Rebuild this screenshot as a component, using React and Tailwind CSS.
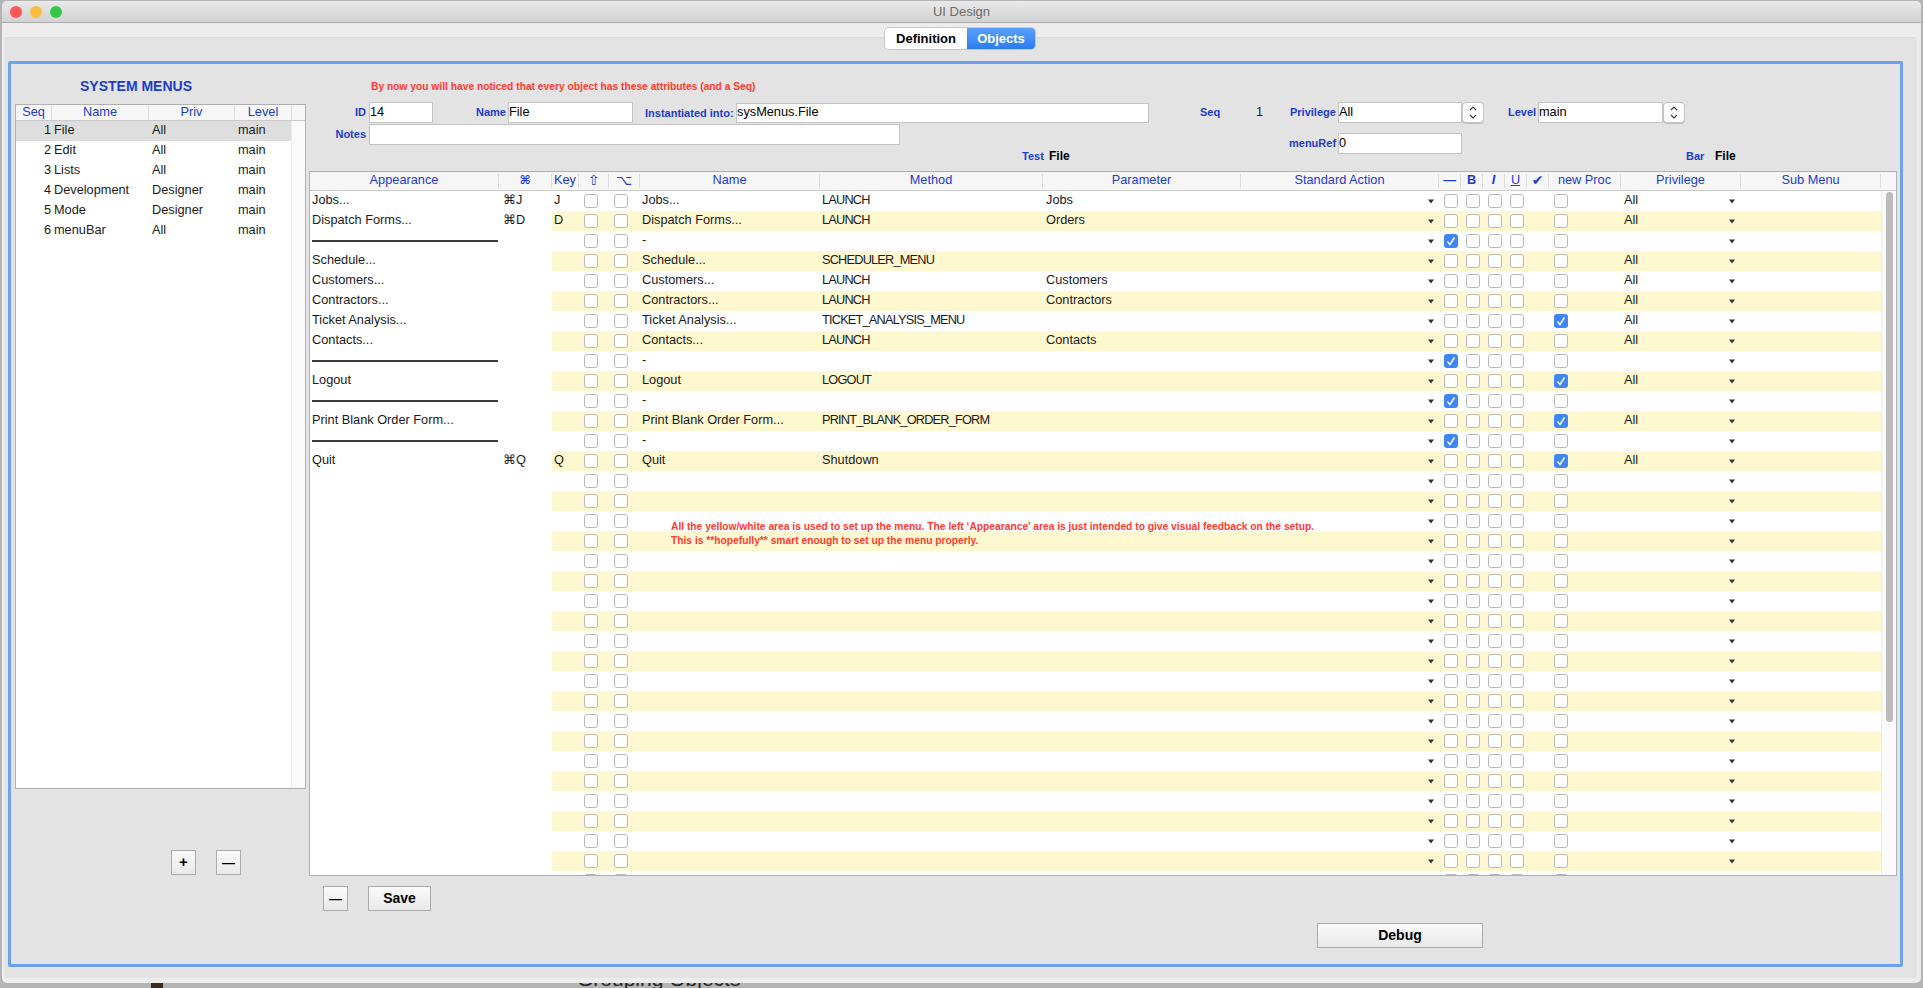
const MENU_ROWS = [
  { look: "Jobs...", cmd: "⌘J", key: "J", name: "Jobs...", method: "LAUNCH", param: "Jobs", priv: "All" },
  { look: "Dispatch Forms...", cmd: "⌘D", key: "D", name: "Dispatch Forms...", method: "LAUNCH", param: "Orders", priv: "All" },
  { sep: true, name: "-" },
  { look: "Schedule...", name: "Schedule...", method: "SCHEDULER_MENU", priv: "All" },
  { look: "Customers...", name: "Customers...", method: "LAUNCH", param: "Customers", priv: "All" },
  { look: "Contractors...", name: "Contractors...", method: "LAUNCH", param: "Contractors", priv: "All" },
  { look: "Ticket Analysis...", name: "Ticket Analysis...", method: "TICKET_ANALYSIS_MENU", newProc: true, priv: "All" },
  { look: "Contacts...", name: "Contacts...", method: "LAUNCH", param: "Contacts", priv: "All" },
  { sep: true, name: "-" },
  { look: "Logout", name: "Logout", method: "LOGOUT", newProc: true, priv: "All" },
  { sep: true, name: "-" },
  { look: "Print Blank Order Form...", name: "Print Blank Order Form...", method: "PRINT_BLANK_ORDER_FORM", newProc: true, priv: "All" },
  { sep: true, name: "-" },
  { look: "Quit", cmd: "⌘Q", key: "Q", name: "Quit", method: "Shutdown", newProc: true, priv: "All" },
];

const ROWS = Array.from({ length: 35 }, (_, i) => MENU_ROWS[i] || {});

const SYSTEM_MENUS = [
  { seq: 1, name: "File", priv: "All" },
  { seq: 2, name: "Edit", priv: "All" },
  { seq: 3, name: "Lists", priv: "All" },
  { seq: 4, name: "Development", priv: "Designer" },
  { seq: 5, name: "Mode", priv: "Designer" },
  { seq: 6, name: "menuBar", priv: "All" },
];

const LEFT_COLS = "grid grid-cols-[189px_53px]";
const RIGHT_COLS = "grid grid-cols-[27px_30px_31px_180px_223px_198px_198px_22px_22px_22px_22px_22px_72px_120px_140px]";
const LIST_COLS = "grid grid-cols-[36px_97px_86px_57px]";

const HeadCell = ({ children, className = "" }) => (
  <div className={`h-[14px] leading-[12px] text-center border-r border-[#dcdcdc] text-[#1c3ccf] ${className}`}>
    {children}
  </div>
);

const Label = ({ children, className = "" }) => (
  <div className={`text-[11px] leading-[20px] font-bold whitespace-nowrap text-[#1c3ccf] ${className}`}>{children}</div>
);

const Field = ({ value = "", className = "" }) => (
  <input
    readOnly
    value={value}
    className={`block bg-white border border-[#c4c4c4] pb-[3px] text-[12.75px] text-black outline-none ${className}`}
  />
);

const Stepper = () => (
  <div className="w-[22px] h-[21px] bg-white border border-[#c4c4c4] rounded-[4px] flex items-center justify-center shadow-[0_1px_0_#bdbdbd]">
    <svg width="8" height="15" viewBox="0 0 8 15" fill="none" stroke="#333" strokeWidth="1.1">
      <path d="M1 5 L4 2 L7 5" />
      <path d="M1 10 L4 13 L7 10" />
    </svg>
  </div>
);

const Check = ({ on }) =>
  on ? (
    <div className="w-[14px] h-[14px] rounded-[3px] bg-[#3f86f5] flex items-center justify-center">
      <svg width="10" height="10" viewBox="0 0 10 10" fill="none" stroke="#fff" strokeWidth="1.4">
        <path d="M1.5 5.5 L4 8.5 L8.5 1.5" />
      </svg>
    </div>
  ) : (
    <div className="w-[14px] h-[14px] rounded-[3px] bg-white border border-[#b8b8b8]" />
  );

const Caret = () => (
  <svg width="6" height="5" viewBox="0 0 6 5" fill="#333">
    <path d="M0 0.5 H6 L3 4.5 Z" />
  </svg>
);

const BoxCell = ({ on }) => (
  <div className="h-[20px] pl-[5px] flex items-center">
    <Check on={on} />
  </div>
);

const SquareButton = ({ children, className = "" }) => (
  <button className={`flex items-center justify-center bg-linear-to-b from-[#fafafa] to-[#e9e9e9] border border-[#ababab] text-black font-bold ${className}`}>
    {children}
  </button>
);

const Row = ({ row, index }) => (
  <div className="flex h-[20px] leading-[18px] text-[#1a1a1a]">
    <div className={`${LEFT_COLS} w-[242px]`}>
      <div className="pl-[2px]">
        {row.sep ? <div className="mt-[9px] w-[186px] h-[2px] bg-[#3a3a3a]" /> : row.look}
      </div>
      <div className="pl-[4px]">{row.cmd}</div>
    </div>
    <div className={`${RIGHT_COLS} w-[1329px] ${index % 2 === 1 ? "bg-[#fef8d0]" : "bg-white"}`}>
      <div className="pl-[2px]">{row.key}</div>
      <BoxCell />
      <BoxCell />
      <div className="pl-[2px]">{row.name}</div>
      <div className={`pl-[2px] ${row.method && row.method === row.method.toUpperCase() ? "tracking-[-0.8px]" : ""}`}>{row.method}</div>
      <div className="pl-[3px]">{row.param}</div>
      <div className="h-[20px] pr-[5px] pt-[1px] flex items-center justify-end">
        <Caret />
      </div>
      <BoxCell on={row.sep} />
      <BoxCell />
      <BoxCell />
      <BoxCell />
      <div />
      <BoxCell on={row.newProc} />
      <div className="h-[20px] pl-[3px] pr-[6px] flex items-center justify-between">
        <span className="-mt-[2px]">{row.priv}</span>
        <span className="ml-auto pt-[1px] flex">
          <Caret />
        </span>
      </div>
      <div />
    </div>
  </div>
);

const MenuTable = () => (
  <div className="relative w-[1588px] h-[705px] bg-white border border-[#b0b0b0] overflow-hidden text-[12.75px]">
    <div className="flex items-center h-[19px] bg-[#f6f6f6] border-b border-[#c9c9c9]">
      <div className={`${LEFT_COLS} w-[242px]`}>
        <HeadCell>Appearance</HeadCell>
        <HeadCell className="font-['DejaVu_Sans',sans-serif] font-bold text-[12px]">⌘</HeadCell>
      </div>
      <div className={`${RIGHT_COLS} w-[1329px]`}>
        <HeadCell>Key</HeadCell>
        <HeadCell className="font-['DejaVu_Sans',sans-serif] text-[14px]">⇧</HeadCell>
        <HeadCell className="font-['DejaVu_Sans',sans-serif] text-[14px]">⌥</HeadCell>
        <HeadCell>Name</HeadCell>
        <HeadCell>Method</HeadCell>
        <HeadCell>Parameter</HeadCell>
        <HeadCell>Standard Action</HeadCell>
        <HeadCell className="font-bold">—</HeadCell>
        <HeadCell className="font-bold">B</HeadCell>
        <HeadCell className="font-bold italic">I</HeadCell>
        <HeadCell className="underline">U</HeadCell>
        <HeadCell className="font-['DejaVu_Sans',sans-serif] text-[14px]">✔</HeadCell>
        <HeadCell>new Proc</HeadCell>
        <HeadCell>Privilege</HeadCell>
        <HeadCell>Sub Menu</HeadCell>
      </div>
    </div>
    <div className="flex">
      <div className="w-[1571px]">
        {ROWS.map((row, i) => (
          <Row key={i} row={row} index={i} />
        ))}
      </div>
      <div className="w-[15px] h-[686px] bg-[#fafafa] border-l border-[#ececec] pl-[4px] pt-[1px]">
        <div className="w-[7px] h-[530px] rounded-full bg-[#bcbcbc]" />
      </div>
    </div>
    {/* note lies over the rows */}
    <div className="absolute left-[361px] top-[348px] text-[10.25px] leading-[14px] font-bold text-[#ff3b30] whitespace-nowrap">
      <div>All the yellow/white area is used to set up the menu. The left ‘Appearance’ area is just intended to give visual feedback on the setup.</div>
      <div>This is **hopefully** smart enough to set up the menu properly.</div>
    </div>
  </div>
);

const SidePanel = () => (
  <div className="w-[295px] pl-[4px] flex-shrink-0">
    <div className="h-[40px] pt-[4px] pl-[65px] flex items-center text-[14px] font-bold text-[#1c3ccf]">SYSTEM MENUS</div>
    <div className="flex flex-col w-[291px] h-[685px] bg-white border border-[#b0b0b0] text-[12.75px] text-[#1a1a1a]">
      <div className="flex items-center h-[16px] flex-shrink-0 bg-[#f6f6f6] border-b border-[#c9c9c9]">
        <div className={`${LIST_COLS} w-[276px]`}>
          <HeadCell>Seq</HeadCell>
          <HeadCell>Name</HeadCell>
          <HeadCell>Priv</HeadCell>
          <HeadCell>Level</HeadCell>
        </div>
      </div>
      <div className="flex flex-1">
        <div className="w-[275px]">
          {SYSTEM_MENUS.map((m) => (
            <div key={m.seq} className={`${LIST_COLS} h-[20px] leading-[18px] ${m.seq === 1 ? "bg-[#dedede]" : ""}`}>
              <div className="text-right pr-[1px]">{m.seq}</div>
              <div className="pl-[2px]">{m.name}</div>
              <div className="pl-[3px]">{m.priv}</div>
              <div className="pl-[3px]">main</div>
            </div>
          ))}
        </div>
        <div className="flex-1 bg-[#fafafa] border-l border-[#ececec]" />
      </div>
    </div>
    <div className="mt-[61px] ml-[156px] flex gap-[20px]">
      <SquareButton className="w-[25px] h-[25px] text-[15px]">+</SquareButton>
      <SquareButton className="w-[25px] h-[25px] text-[13px]">—</SquareButton>
    </div>
  </div>
);

const FormFields = () => (
  <div className="flex h-[69px] mt-[9px]">
    <div className="w-[881px] flex-shrink-0">
      <div className="flex h-[21px]">
        <Label className="w-[57px] text-right">ID</Label>
        <Field value="14" className="ml-[3px] w-[64px] h-[21px]" />
        <Label className="ml-[43px] w-[29px]">Name</Label>
        <Field value="File" className="ml-[3px] w-[125px] h-[21px]" />
        <Label className="ml-[12px] w-[88px] mt-[1px]">Instantiated into:</Label>
        <Field value="sysMenus.File" className="ml-[3px] w-[413px] h-[20px] mt-[1px]" />
      </div>
      <div className="flex h-[21px] mt-[1px]">
        <Label className="w-[57px] text-right">Notes</Label>
        <Field className="ml-[3px] w-[531px] h-[21px]" />
      </div>
      <div className="flex items-center h-[14px] mt-[4px] ml-[713px]">
        <div className="w-[22px] text-[11px] font-bold text-[#1c3ccf]">Test</div>
        <div className="ml-[5px] text-[12px] font-bold text-black">File</div>
      </div>
    </div>
    <div>
      <div className="flex h-[21px]">
        <Label className="ml-[10px] w-[18px]">Seq</Label>
        <div className="ml-[38px] w-[6px] text-[12.75px] leading-[20px] text-[#1a1a1a]">1</div>
        <Label className="ml-[28px] w-[45px]">Privilege</Label>
        <Field value="All" className="ml-[3px] w-[124px] h-[21px]" />
        <Stepper />
        <Label className="ml-[24px] w-[26px]">Level</Label>
        <Field value="main" className="ml-[4px] w-[125px] h-[21px]" />
        <Stepper />
      </div>
      <div className="flex h-[21px] mt-[10px]">
        <Label className="ml-[99px] w-[46px]">menuRef</Label>
        <Field value="0" className="ml-[3px] w-[124px] h-[21px]" />
      </div>
      <div className="flex items-center h-[14px] -mt-[5px] ml-[496px]">
        <div className="w-[17px] text-[11px] font-bold text-[#1c3ccf]">Bar</div>
        <div className="ml-[12px] text-[12px] font-bold text-black">File</div>
      </div>
    </div>
  </div>
);

const MainPanel = () => (
  <div className="ml-[3px] w-[1588px]">
    <div className="mt-[17px] ml-[62px] h-[12px] text-[10.25px] leading-[12px] font-bold text-[#ff3b30]">
      By now you will have noticed that every object has these attributes (and a Seq)
    </div>
    <FormFields />
    <MenuTable />
    <div className="flex mt-[10px]">
      <SquareButton className="ml-[14px] w-[25px] h-[25px] text-[13px]">—</SquareButton>
      <SquareButton className="ml-[20px] w-[63px] h-[25px] text-[14px]">Save</SquareButton>
    </div>
    <SquareButton className="mt-[12px] ml-[1008px] w-[166px] h-[25px] text-[14px]">Debug</SquareButton>
  </div>
);

export default function App() {
  return (
    <div className="relative w-[1923px] h-[988px] overflow-hidden bg-[#b4b4b4] font-['Liberation_Sans',sans-serif]">
      {/* desktop showing under the window */}
      <div className="absolute left-[151px] top-[980px] w-[12px] h-[8px] bg-[#3a2a20]" />
      <div className="absolute left-[577px] top-[967px] text-[21px] leading-[24px] text-[#222]">Grouping Objects</div>

      <div className="absolute left-[2px] top-[1px] w-[1919px] h-[982px] flex flex-col rounded-[5px] bg-[#ececec] overflow-hidden">
        <div className="relative flex items-center justify-center h-[22px] flex-shrink-0 bg-linear-to-b from-[#e9e9e9] to-[#d2d2d2] border-b border-[#ababab] text-[13px] text-[#6b6b6b]">
          <div className="absolute left-[8px] top-[5px] flex gap-[8px]">
            <div className="w-[12px] h-[12px] rounded-full bg-[#fc5753]" />
            <div className="w-[12px] h-[12px] rounded-full bg-[#fdbc40]" />
            <div className="w-[12px] h-[12px] rounded-full bg-[#33c748]" />
          </div>
          UI Design
        </div>

        <div className="relative z-10 flex justify-center pr-[3px] mt-[5px] -mb-[12px] text-[13px] font-bold">
          <div className="flex h-[21px] rounded-[4px] overflow-hidden shadow-[0_0_0_1px_#c8c8c8]">
            <div className="w-[82px] flex items-center justify-center bg-white text-black">Definition</div>
            <div className="w-[68px] flex items-center justify-center bg-linear-to-b from-[#5aa0fa] to-[#2b7bf0] text-white">Objects</div>
          </div>
        </div>

        <div className="ml-[2px] w-[1913px] h-[941px] pt-[23px] pl-[4px] bg-[#e3e3e3] border-t border-[#dcdcdc] rounded-[4px]">
          <div className="flex w-[1895px] h-[906px] border-3 border-[#6ea0ee] rounded-[2px] text-[13px]">
            <SidePanel />
            <MainPanel />
          </div>
        </div>
      </div>
    </div>
  );
}
